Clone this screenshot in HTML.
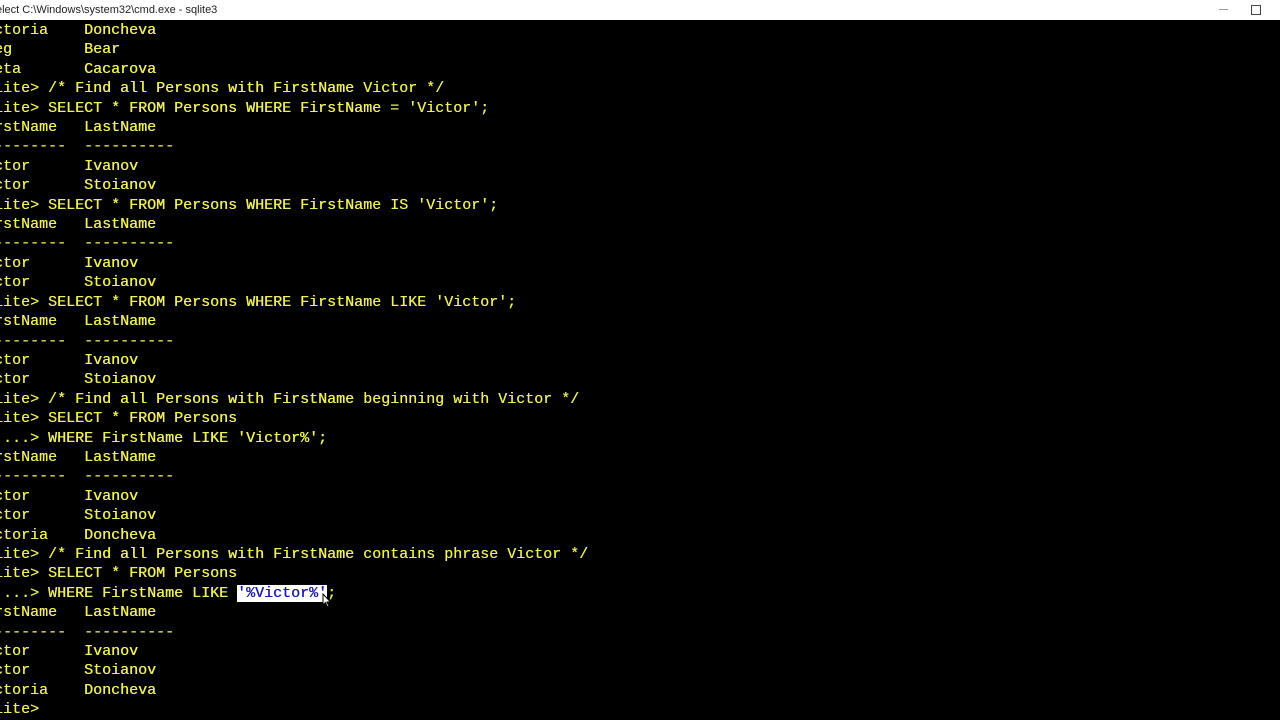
<!DOCTYPE html>
<html><head><style>
body{margin:0;width:1280px;height:720px;background:#000;overflow:hidden;position:relative}
.tb{position:absolute;left:0;top:0;width:1280px;height:20px;background:#fff;font:12px "Liberation Sans",sans-serif;color:#222}
.tb span{position:absolute;left:-4px;top:4px;font-size:11px}
.min{position:absolute;left:1219px;top:9px;width:9px;height:1px;background:#999}
.max{position:absolute;left:1251px;top:5px;width:8px;height:8px;border:1px solid #444}
pre{position:absolute;left:-24px;top:21px;margin:0;font:15px/19.4px "Liberation Mono",monospace;color:#eeee5e;white-space:pre;text-shadow:0.3px 0 0 #eeee5e}
.sel{background:#fff;color:#1a1aa8;text-shadow:0.3px 0 0 #1a1aa8}
</style></head><body>
<div class="tb"><span>elect C:\Windows\system32\cmd.exe - sqlite3</span><div class="min"></div><div class="max"></div></div>
<pre>Victoria    Doncheva
Oleg        Bear
Iveta       Cacarova
sqlite> /* Find all Persons with FirstName Victor */
sqlite> SELECT * FROM Persons WHERE FirstName = 'Victor';
FirstName   LastName
----------  ----------
Victor      Ivanov
Victor      Stoianov
sqlite> SELECT * FROM Persons WHERE FirstName IS 'Victor';
FirstName   LastName
----------  ----------
Victor      Ivanov
Victor      Stoianov
sqlite> SELECT * FROM Persons WHERE FirstName LIKE 'Victor';
FirstName   LastName
----------  ----------
Victor      Ivanov
Victor      Stoianov
sqlite> /* Find all Persons with FirstName beginning with Victor */
sqlite> SELECT * FROM Persons
   ...> WHERE FirstName LIKE 'Victor%';
FirstName   LastName
----------  ----------
Victor      Ivanov
Victor      Stoianov
Victoria    Doncheva
sqlite> /* Find all Persons with FirstName contains phrase Victor */
sqlite> SELECT * FROM Persons
   ...> WHERE FirstName LIKE <span class="sel">'%Victor%'</span>;
FirstName   LastName
----------  ----------
Victor      Ivanov
Victor      Stoianov
Victoria    Doncheva
sqlite></pre>
<svg style="position:absolute;left:322px;top:593px" width="10" height="15" viewBox="0 0 10 15"><path d="M1 1 L1 12 L3.5 9.5 L5.5 14 L7 13.3 L5 9 L8.5 9 Z" fill="#fff" stroke="#000" stroke-width="1"/></svg>
</body></html>
